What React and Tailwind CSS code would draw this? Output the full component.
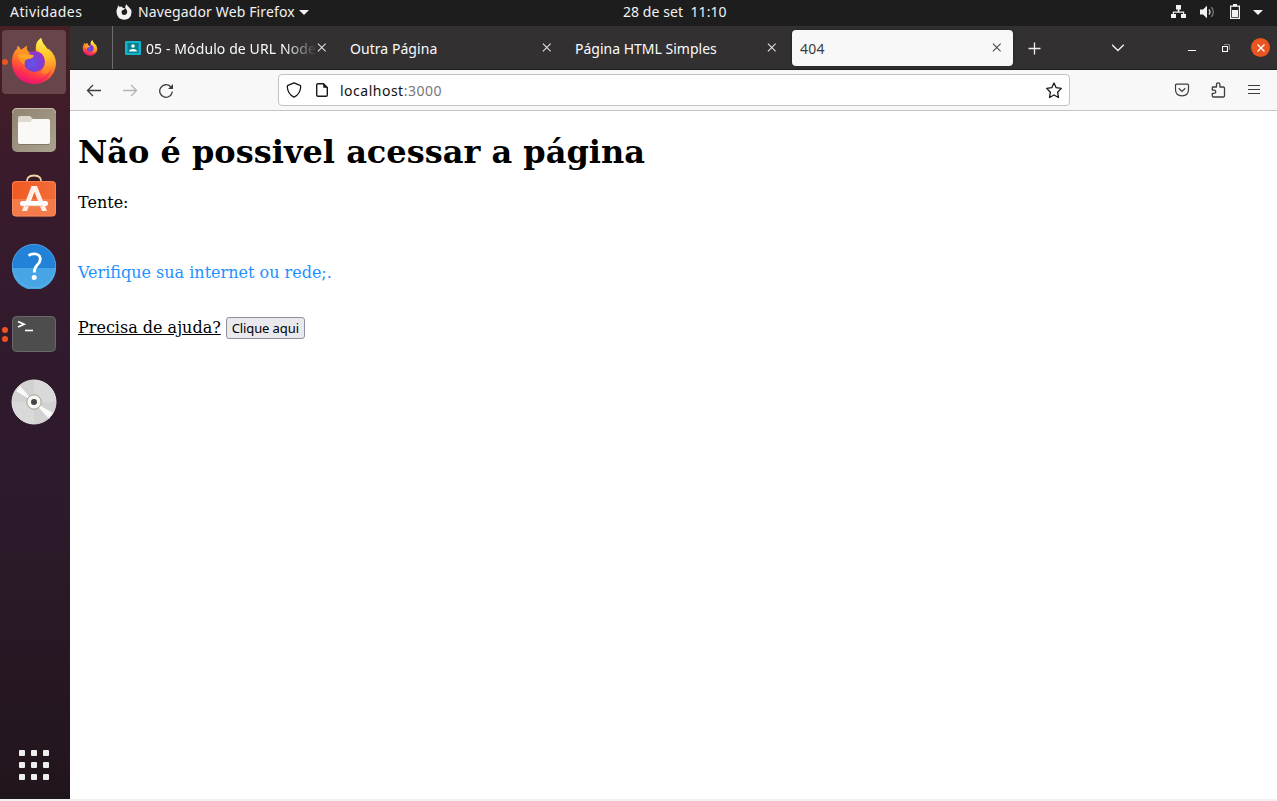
import React from 'react';

function FirefoxLogo({ className, id }) {
  return (
    <svg className={className} viewBox="0 0 46 48">
      <defs>
        <linearGradient id={id + 'body'} x1="0.75" y1="0" x2="0.35" y2="1">
          <stop offset="0" stopColor="#ffe53b" />
          <stop offset="0.35" stopColor="#ffb020" />
          <stop offset="0.62" stopColor="#ff6a2c" />
          <stop offset="0.82" stopColor="#ff2f50" />
          <stop offset="1" stopColor="#e3127a" />
        </linearGradient>
        <linearGradient id={id + 'flame'} x1="0.5" y1="0" x2="0.6" y2="1">
          <stop offset="0" stopColor="#fff04d" />
          <stop offset="0.5" stopColor="#ffc52b" />
          <stop offset="1" stopColor="#ff7a2a" />
        </linearGradient>
        <radialGradient id={id + 'globe'} cx="0.4" cy="0.6" r="0.65">
          <stop offset="0" stopColor="#6555e8" />
          <stop offset="0.55" stopColor="#7540d8" />
          <stop offset="1" stopColor="#a52fbd" />
        </radialGradient>
      </defs>
      <path d="M1 25C1 19 3 14 6 12L6.500 9Q9 10 10 13L16 9Q15 13 18 15L25 15C24 8 26 4 30 1Q31 6 35 10L36 13L38 12Q45 18 45 27C44 39 35 47 23 47S1 38 1 25Z" fill={'url(#' + id + 'body)'} />
      <path d="M30 1Q31 6 35 10C42 17 44 26 40 32C37 38 33 38 30 35C37 28 32 20 29 16Q24 12 26 5Z" fill={'url(#' + id + 'flame)'} />
      <circle cx="23.500" cy="24.500" r="10.500" fill={'url(#' + id + 'globe)'} />
      <path d="M6 12L6.500 9Q9 10 10 13L16 9Q15 13 17 16Q19 17.500 23 18.500Q22 21.500 17 22Q13 23 13.500 28C8 25 6 19 6 12Z" fill="#ff9227" />
      <path d="M7 18.500Q13 16.500 17 17.500L23 18.500Q21 22 15 22Q10 21.500 7 18.500Z" fill="#ffa62a" />
      <path d="M4 32C8 42 19 45 28 42Q37 39 40 32Q37 46 23 46Q9 45 4 32Z" fill="#f21f68" opacity="0.55" />
    </svg>
  );
}

function Close({ stroke = '#e6e6e6' }) {
  return (
    <svg className="h-[9px] w-[9px] shrink-0" viewBox="0 0 9 9" fill="none" stroke={stroke} strokeWidth="1.1">
      <path d="M.9.6L8.700 8.400M8.700.6L.9 8.400" />
    </svg>
  );
}

function TopBar() {
  return (
    <header className="grid h-[26px] shrink-0 grid-cols-[623px_1fr] bg-[#1d1d1d] text-[14px] leading-[24px] text-[#f2f2f2]">
      <div className="flex items-center whitespace-nowrap pb-[2px] pl-[10px]">
        <span className="w-[106px] tracking-[0.43px]">Atividades</span>
        <svg className="h-4 w-4" viewBox="0 0 16 16">
          <path fillRule="evenodd" fill="#f2f2f2" d="M.5 8Q.3 5.500 1.500 3.800L2.200 1.300L3.700 3Q5 2.300 6 2.800L6.800 4L9 4.300Q8.600 5.800 6.500 6.200L5.600 7.200Q5.300 10.800 8 11Q11.300 10.800 11.200 7.800Q11 5.500 9.300 4.200Q8.700 1.700 10.600.3Q11.500 2.300 13 3.300Q15.600 5.200 15.500 8.500Q15 15.500 8 15.700Q1 15.300.5 8Z" />
        </svg>
        <span className="ml-[6px] w-[158px] tracking-[0.13px]">Navegador Web Firefox</span>
        <svg className="ml-[3px] h-[5px] w-[10px]" viewBox="0 0 10 5"><path d="M0 0H10L5 5Z" fill="#f2f2f2" /></svg>
      </div>
      <div className="flex items-center justify-between pr-[14px] pb-[2px]">
        <span className="whitespace-pre tracking-[0.07px]">28 de set  11:10</span>
        <div className="flex items-center">
          <svg className="h-[14px] w-[16px]" viewBox="0 0 16 14" fill="#f2f2f2">
            <path d="M5 0H10V4.500H8.400V6.500H13.200V9H15V13H10V9H12V7.700H3V9H5V13H0V9H1.800V6.500H6.600V4.500H5Z" />
          </svg>
          <svg className="ml-[13px] h-[14px] w-[15px]" viewBox="0 0 15 14" fill="none">
            <path d="M0 4.500H3L7 .8V13.200L3 9.500H0Z" fill="#f2f2f2" />
            <path d="M9 4.500Q11 7 9 9.500" stroke="#d0d0d0" strokeWidth="1.300" />
            <path d="M11.300 2Q15.300 7 11.300 12" stroke="#777" strokeWidth="1.300" />
          </svg>
          <svg className="ml-[15px] h-[15px] w-[10px] -translate-y-[1px]" viewBox="0 0 10 15">
            <path d="M.6 2.100H9.400V14.400H.6Z" fill="none" stroke="#f2f2f2" strokeWidth="1.200" />
            <path d="M3 0H7V2.500H3ZM2 6H8V13H2Z" fill="#f2f2f2" />
          </svg>
          <svg className="ml-[13px] h-[5px] w-[10px]" viewBox="0 0 10 5"><path d="M0 0H10L5 5Z" fill="#f2f2f2" /></svg>
        </div>
      </div>
    </header>
  );
}

function FilesIcon() {
  return (
    <svg className="h-[46px] w-[46px]" viewBox="0 0 46 46">
      <defs><linearGradient id="files" x1="0" y1="0" x2="1" y2="1"><stop stopColor="#8f8470" /><stop offset="1" stopColor="#aaa28f" /></linearGradient></defs>
      <rect x="1" y="1" width="44" height="44" rx="5" fill="url(#files)" />
      <path d="M1.600 6Q1.600 1.500 6 1.500H40Q44.400 1.500 44.400 6" fill="none" stroke="#c5beb0" />
      <path d="M7 19V11Q7 9 9 9H19L22 12H37V19Z" fill="#dedad0" />
      <path d="M7 17Q7 15 9 15H19L22 12H37Q39 12 39 14V35Q39 37 37 37H9Q7 37 7 35Z" fill="#faf9f7" />
      <path d="M8 37.500H38" stroke="#827966" />
    </svg>
  );
}

function SoftwareIcon() {
  return (
    <svg className="h-[44px] w-[46px]" viewBox="0 0 46 44">
      <defs><linearGradient id="bag" x1="0" y1="0" x2="1" y2="0"><stop stopColor="#f05a22" /><stop offset="1" stopColor="#f26c38" /></linearGradient></defs>
      <path d="M16 9Q15 1.500 23 1.500Q31 1.500 30 9" fill="none" stroke="#efd5a0" strokeWidth="1.800" />
      <path d="M1 11Q1 7 5 7H41Q45 7 45 11V25H1Z" fill="url(#bag)" />
      <path d="M1 25H45V38Q45 42.500 41 42.500H5Q1 42.500 1 38Z" fill="#f47c4b" />
      <rect x="1.500" y="7.500" width="43" height="34.500" rx="4" fill="none" stroke="#ff9869" strokeOpacity=".55" />
      <path d="M20.500 12H26L36 37H31L23.500 18L16 37H11Z" fill="#fff0ea" />
      <rect x="9" y="27" width="28" height="5" rx="2.500" fill="#fff" />
      <path d="M14 32H32" stroke="#e6a78d" strokeWidth=".8" />
    </svg>
  );
}

function HelpIcon() {
  return (
    <svg className="h-[46px] w-[46px]" viewBox="0 0 46 46">
      <circle cx="23" cy="23" r="22" fill="#2282d8" />
      <path d="M1 25H45A22 22 0 0 1 1 25Z" fill="#47a5e5" />
      <circle cx="23" cy="23" r="21.700" fill="none" stroke="#6db7ed" strokeWidth=".6" />
      <path d="M17.500 12.500Q21 10.200 25 11Q29.500 12 29.300 16.500Q29 19.500 26 22.300Q23.300 25 23.300 29.500" fill="none" stroke="#fff" strokeWidth="2.800" />
      <circle cx="23.200" cy="34.500" r="2.500" fill="#fff" />
    </svg>
  );
}

function TerminalIcon() {
  return (
    <svg className="h-[38px] w-[46px]" viewBox="0 0 46 38">
      <rect x="1.500" y="1.500" width="43" height="35" rx="4" fill="#4d4d4d" stroke="#696969" />
      <path d="M7 6.500L13 9.200L7 12" fill="none" stroke="#fff" strokeWidth="1.800" />
      <path d="M14 15.500H22" stroke="#fff" strokeWidth="1.600" />
    </svg>
  );
}

function DiscIcon() {
  return (
    <svg className="h-[46px] w-[46px]" viewBox="0 0 46 46">
      <circle cx="23" cy="23" r="22" fill="#d2d2d2" />
      <path d="M23 23V1A22 22 0 0 1 45 23Z" fill="#d9d9d9" />
      <path d="M23 23V45A22 22 0 0 1 1 23Z" fill="#d9d9d9" />
      <path d="M23 23L5 12L9 7ZM23 23L42 34L38 40Z" fill="#fafafa" />
      <circle cx="23" cy="23" r="22" fill="none" stroke="#e2e2e2" />
      <circle cx="23" cy="23" r="7.200" fill="#f7f7f5" stroke="#aaa08e" />
      <circle cx="23" cy="23" r="3" fill="#454545" />
    </svg>
  );
}

function DockItem({ dots = 0, active = false, children }) {
  return (
    <div className="flex h-[68px] w-[70px] shrink-0 items-start">
      <div className={active ? 'ml-[2px] flex h-16 w-16 items-center rounded bg-[#66464b]' : 'ml-[2px] flex h-16 w-16 items-center'}>
        <div className="flex w-[9px] flex-col gap-[3px]">
          {Array.from({ length: dots }, (_, i) => <i key={i} className="h-[6px] w-[6px] rounded-full bg-[#e95420]" />)}
        </div>
        {children}
      </div>
    </div>
  );
}

function Dock() {
  return (
    <aside className="flex w-[70px] shrink-0 flex-col bg-[linear-gradient(180deg,#481f25_0%,#3a1b2b_18%,#301a2d_42%,#2c1a2a_65%,#21151d_100%)] pt-[4px]">
      <DockItem dots={1} active><FirefoxLogo id="dock" className="h-[48px] w-[46px] -translate-y-[1px]" /></DockItem>
      <DockItem><FilesIcon /></DockItem>
      <DockItem><div className="-translate-y-[2px]"><SoftwareIcon /></div></DockItem>
      <DockItem><HelpIcon /></DockItem>
      <DockItem dots={2}><TerminalIcon /></DockItem>
      <DockItem><DiscIcon /></DockItem>
      <div className="mt-auto mb-[19px] ml-[19px] grid w-[30px] grid-cols-3 gap-[6px]">
        {Array.from({ length: 9 }, (_, i) => <i key={i} className="h-[6px] w-[6px] rounded-[1px] bg-[#eeeeec]" />)}
      </div>
    </aside>
  );
}

function TabStrip() {
  return (
    <div className="flex h-11 shrink-0 items-center border-b border-[#1d1c1d] bg-[#323031] text-[14px] leading-[20px] text-[#fbfbfe]">
      <div className="flex h-[43px] w-[43px] items-center border-r border-[#6f6e6f] pl-[12px]">
        <FirefoxLogo id="tab" className="h-4 w-4" />
      </div>
      <div className="flex w-[225px] items-center pl-[12px]">
        <svg className="h-[14px] w-4 shrink-0" viewBox="0 0 16 14">
          <rect width="16" height="14" rx="1" fill="#10b5cd" />
          <rect x="2.500" y="2" width="11" height="10" fill="#087f90" />
          <circle cx="8" cy="5" r="1.800" fill="#fff" />
          <path d="M4 10.500Q4 8 8 8T12 10.500Z" fill="#fff" />
        </svg>
        <span className="ml-[5px] w-[170px] whitespace-nowrap pt-[2px] tracking-[0.1px] [mask-image:linear-gradient(to_right,#000_138px,transparent_172px)]">05 - Módulo de URL Node</span>
        <span className="ml-[1px]"><Close /></span>
      </div>
      <div className="flex w-[225px] items-center pl-[12px]">
        <span className="w-[192px] pt-[2px] tracking-[0.05px]">Outra Página</span><Close />
      </div>
      <div className="flex w-[229px] items-center pl-[12px]">
        <span className="w-[192px] pt-[2px]">Página HTML Simples</span><Close />
      </div>
      <div className="flex h-9 w-[221px] items-center rounded bg-[#f8f8f8] pl-2 text-[#3d3d3d] shadow-[0_0_3px_rgba(0,0,0,0.45)]">
        <span className="w-[192px] pt-[2px] tracking-[0.2px]">404</span><Close stroke="#444" />
      </div>
      <svg className="ml-[15px] mt-[1px] h-[13px] w-[13px]" viewBox="0 0 13 13"><path d="M6.500.5V12.500M.5 6.500H12.500" stroke="#eee" strokeWidth="1.300" /></svg>
      <svg className="ml-[71px] h-[8px] w-[13px]" viewBox="0 0 13 8"><path d="M0 .8L5.900 6.600L11.800.8" stroke="#eee" strokeWidth="1.400" fill="none" /></svg>
      <div className="ml-[63px] mt-[5px] h-px w-2 bg-white" />
      <svg className="ml-[26px] h-[8px] w-[8px]" viewBox="0 0 8 8" fill="none">
        <path d="M.5 2.500H5.500V7.500H.5Z" stroke="#fff" strokeWidth="1.100" />
        <path d="M2 .5H7.500V6" stroke="#888" />
      </svg>
      <div className="ml-[21px] flex h-[19px] w-[19px] items-center justify-center rounded-full bg-[#e95420]">
        <svg className="h-[8px] w-[8px]" viewBox="0 0 8 8"><path d="M.5.5L7.500 7.500M7.500.5L.5 7.500" stroke="#fff" strokeWidth="1.400" /></svg>
      </div>
    </div>
  );
}

function Toolbar() {
  return (
    <div className="flex h-[41px] shrink-0 items-center border-b border-[#c4c4c4] bg-[#f8f8f8]">
      <svg className="ml-4 h-4 w-4" viewBox="0 0 16 16" fill="none" stroke="#3d3d3d" strokeWidth="1.300"><path d="M15 8.500H1.500M7 3L1.500 8.500L7 14" /></svg>
      <svg className="ml-5 h-4 w-4" viewBox="0 0 16 16" fill="none" stroke="#b4b4b4" strokeWidth="1.300"><path d="M1 8.500H14.500M9 3L14.500 8.500L9 14" /></svg>
      <svg className="ml-5 h-4 w-4" viewBox="0 0 16 16" fill="none" stroke="#3d3d3d" strokeWidth="1.300"><path d="M12.700 4.800A6.300 6.300 0 1 0 14.300 9.500" /><path d="M15 2V7H10Z" fill="#3d3d3d" stroke="none" /></svg>
      <div className="ml-[104px] flex h-8 w-[792px] items-center rounded-[4px] border border-[#c2c2c2] bg-white">
        <svg className="ml-[7px] h-4 w-4" viewBox="0 0 16 16" fill="none" stroke="#171717" strokeWidth="1.300" strokeLinejoin="round"><path d="M8 .8L14 3.400Q14.800 3.800 14.700 5Q14.300 12 8 15.200Q1.700 12 1.300 5Q1.200 3.800 2 3.400Z" /></svg>
        <svg className="ml-3 h-4 w-4" viewBox="0 0 16 16" fill="none" stroke="#171717" strokeWidth="1.400"><path d="M4 1.700H9.500L13.300 5.500V13Q13.300 14.300 12 14.300H4Q2.700 14.300 2.700 13V3Q2.700 1.700 4 1.700Z" /><path d="M9.500 1.700V5.500H13.300Z" fill="#171717" strokeWidth=".5" /></svg>
        <span className="ml-[10px] pt-[2px] text-[14px] leading-5 tracking-[0.5px] text-[#111]">localhost<span className="text-[#777]">:3000</span></span>
        <svg className="ml-auto mr-[7px] h-[17px] w-[17px]" viewBox="0 0 17 17" fill="none" stroke="#171717" strokeWidth="1.300" strokeLinejoin="round"><path d="M9 1L11.200 5.700L16.300 6.400L12.600 10.200L13.500 15.500L9 13L4.500 15.500L5.400 10.200L1.700 6.400L6.800 5.700Z" /></svg>
      </div>
      <svg className="ml-[104px] h-4 w-4" viewBox="0 0 16 16" fill="none" stroke="#3d3d3d" strokeWidth="1.200"><path d="M2.500 2.200H13.500Q14.500 2.200 14.500 3.200V7.500Q14.500 13.800 8 13.800T1.500 7.500V3.200Q1.500 2.200 2.500 2.200Z" /><path d="M4.700 6.300L8 9.400L11.300 6.300" /></svg>
      <svg className="ml-5 h-4 w-4" viewBox="0 0 16 16" fill="none" stroke="#3d3d3d" strokeWidth="1.300" strokeLinejoin="round"><path d="M3 5H6.500V2.500Q6.500 .8 8.200.8T9.900 2.500V5H13.300Q14.500 5 14.500 6.200V13.800Q14.500 15 13.300 15H3.500Q2.300 15 2.300 13.800V11.300H4Q5.700 11.300 5.700 9.700T4 8.100H2.300V5.700Q2.300 5 3 5Z" /></svg>
      <svg className="ml-[21px] h-[12px] w-[13px]" viewBox="0 0 13 12" stroke="#3d3d3d"><path d="M1 1.500H13M1 5.500H13M1 9.500H13" strokeWidth="1.200" /></svg>
    </div>
  );
}

function Page() {
  return (
    <main className="flex-1 bg-white px-2 font-['DejaVu_Serif',serif] text-[16px] leading-[19px] text-black">
      <h1 className="pt-[22px] text-[32px] leading-[38px] font-bold">Não é possivel acessar a página</h1>
      <p className="mt-[22px]">Tente:</p>
      <p className="mt-[51px] text-[#1e90ff]">Verifique sua internet ou rede;.</p>
      <div className="mt-[35px] flex items-center">
        <span className="-mt-[2px] underline">Precisa de ajuda?</span>
        <button className="ml-[5px] h-[22px] w-[79px] rounded-[3px] border border-[#8f8f9d] bg-[#e9e9ed] font-['Noto_Sans',sans-serif] text-[13px] leading-[20px] tracking-[-0.1px] whitespace-nowrap">Clique aqui</button>
      </div>
    </main>
  );
}

export default function App() {
  return (
    <div className="flex h-[801px] w-[1277px] flex-col overflow-hidden border-b-2 border-[#f0f0f0] bg-white font-['Noto_Sans',sans-serif]">
      <TopBar />
      <div className="flex min-h-0 flex-1">
        <Dock />
        <div className="flex min-w-0 flex-1 flex-col">
          <TabStrip />
          <Toolbar />
          <Page />
        </div>
      </div>
    </div>
  );
}
